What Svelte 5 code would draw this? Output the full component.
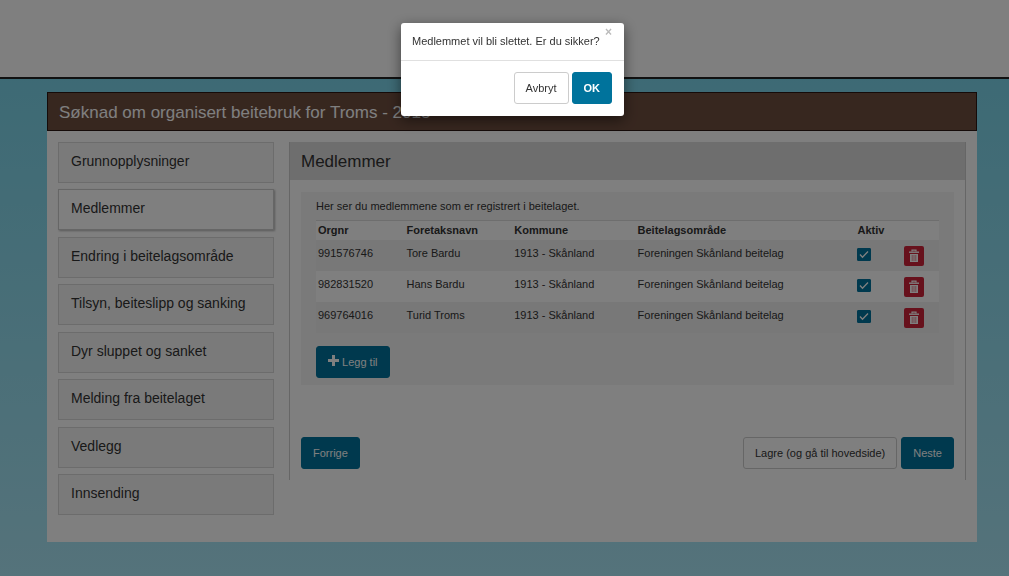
<script>
  const steps = [
    'Grunnopplysninger',
    'Medlemmer',
    'Endring i beitelagsområde',
    'Tilsyn, beiteslipp og sanking',
    'Dyr sluppet og sanket',
    'Melding fra beitelaget',
    'Vedlegg',
    'Innsending'
  ];
  const current = 'Medlemmer';

  let members = $state([
    { orgnr: '991576746', name: 'Tore Bardu', kommune: '1913 - Skånland', area: 'Foreningen Skånland beitelag', active: true },
    { orgnr: '982831520', name: 'Hans Bardu', kommune: '1913 - Skånland', area: 'Foreningen Skånland beitelag', active: true },
    { orgnr: '969764016', name: 'Turid Troms', kommune: '1913 - Skånland', area: 'Foreningen Skånland beitelag', active: true }
  ]);
  let pending = $state(0);
  let open = $state(true);

  function ask(i) {
    pending = i;
    open = true;
  }
  function confirm() {
    members.splice(pending, 1);
    open = false;
  }
</script>

<div class="page">
  <header class="top"></header>
  <div class="container">
    <h1>Søknad om organisert beitebruk for Troms - 2015</h1>
    <div class="columns">
      <nav>
        {#each steps as step}
          <a href="#{step}" class:active={step === current}>{step}</a>
        {/each}
      </nav>
      <main>
        <h2>Medlemmer</h2>
        <div class="content">
          <section class="well">
            <p>Her ser du medlemmene som er registrert i beitelaget.</p>
            <table>
              <colgroup>
                <col class="c1" /><col class="c2" /><col class="c3" /><col class="c4" /><col class="c5" /><col class="c6" />
              </colgroup>
              <thead>
                <tr>
                  <th>Orgnr</th><th>Foretaksnavn</th><th>Kommune</th><th>Beitelagsområde</th><th>Aktiv</th><th></th>
                </tr>
              </thead>
              <tbody>
                {#each members as m, i}
                  <tr>
                    <td>{m.orgnr}</td>
                    <td>{m.name}</td>
                    <td>{m.kommune}</td>
                    <td>{m.area}</td>
                    <td><input type="checkbox" aria-label="Aktiv" bind:checked={m.active} /></td>
                    <td>
                      <button class="trash" aria-label="Slett" onclick={() => ask(i)}>
                        <svg viewBox="0 0 12 14" width="12" height="14" fill="none" stroke="#fff">
                          <path d="M4 2.5V1.2h4v1.3" stroke-width="1.2" />
                          <path d="M1 3.2h10" stroke-width="1.4" />
                          <path d="M2 5v8h8V5z" fill="#fff" stroke="none" />
                          <path d="M4.2 6v6M6 6v6M7.8 6v6" stroke="#cf2338" stroke-width=".5" />
                        </svg>
                      </button>
                    </td>
                  </tr>
                {/each}
              </tbody>
            </table>
            <button class="btn primary add">
              <svg viewBox="0 0 11 11" width="11" height="11"><path d="M4 0h3v4h4v3H7v4H4V7H0V4h4z" fill="#fff" /></svg>
              Legg til
            </button>
          </section>
          <div class="actions">
            <button class="btn primary">Forrige</button>
            <span class="space"></span>
            <button class="btn">Lagre (og gå til hovedside)</button>
            <button class="btn primary">Neste</button>
          </div>
        </div>
      </main>
    </div>
  </div>
</div>

{#if open}
  <div class="backdrop">
    <div class="modal" role="dialog" aria-modal="true" aria-labelledby="question">
      <div class="body">
        <span id="question">Medlemmet vil bli slettet. Er du sikker?</span>
        <button class="close" aria-label="Lukk" onclick={() => (open = false)}>×</button>
      </div>
      <div class="foot">
        <button class="btn" onclick={() => (open = false)}>Avbryt</button>
        <button class="btn primary strong" onclick={confirm}>OK</button>
      </div>
    </div>
  </div>
{/if}

<style>
  :global(body) {
    margin: 0;
    font: 11px/16px "Liberation Sans", Arial, sans-serif;
    color: #333;
  }
  * { box-sizing: border-box; }
  button, input { font: inherit; margin: 0; }
  .page {
    min-height: 100vh;
    background: linear-gradient(#74d2e8, #aae6f6);
  }
  .top {
    height: 79px;
    background: #fff;
    border-bottom: 2px solid #222;
  }
  .container {
    margin: 13px 32px 0 47px;
    background: #fff;
    padding-bottom: 27px;
  }
  h1 {
    margin: 0;
    height: 39px;
    padding: 0 11px;
    border: 1px solid #2a1612;
    background: #6f4e3f;
    color: #fff;
    font-size: 17px;
    line-height: 40px;
    font-weight: 400;
  }
  .columns {
    display: flex;
    align-items: flex-start;
    gap: 15px;
    padding: 11px 11px 0;
  }
  nav {
    flex: 0 0 216px;
    min-height: 373px;
    display: flex;
    flex-direction: column;
    justify-content: space-between;
  }
  nav a {
    height: 41px;
    padding: 0 12px;
    border: 1px solid #d8d8d8;
    background: #f5f5f5;
    color: #333;
    font-size: 14px;
    line-height: 36px;
    text-decoration: none;
  }
  nav a.active {
    background: #fff;
    border-color: #ccc;
    box-shadow: 1px 1px 2px rgba(0, 0, 0, .3);
  }
  main {
    flex: 1;
    min-width: 0;
    border: solid #ccc;
    border-width: 0 1px;
  }
  h2 {
    margin: 0;
    height: 38px;
    padding: 0 11px;
    background: #dcdcdc;
    font-size: 17px;
    line-height: 40px;
    font-weight: 400;
  }
  .content { padding: 12px 11px 11px; }
  .well {
    background: #f5f5f5;
    padding: 6px 15px 7px;
  }
  p { margin: 0 0 6px; }
  table {
    width: 100%;
    table-layout: fixed;
    border-collapse: collapse;
    border-top: 1px solid #ddd;
    background: #fff;
  }
  .c1 { width: 14.2%; }
  .c2 { width: 17.3%; }
  .c3 { width: 19.8%; }
  .c4 { width: 35.3%; }
  .c5 { width: 7.4%; }
  .c6 { width: 6%; }
  th {
    height: 19px;
    padding: 0 2px;
    text-align: left;
  }
  td {
    height: 31px;
    padding: 5px 2px 0;
    vertical-align: top;
  }
  tbody tr:nth-child(odd) { background: #f0f0f0; }
  input {
    appearance: none;
    display: block;
    width: 14px;
    height: 13px;
    margin-top: 3px;
    border-radius: 1px;
    border: 1px solid #00739c;
    background: #fff;
  }
  input:checked {
    background: #00739c url("data:image/svg+xml,%3Csvg xmlns='http://www.w3.org/2000/svg' viewBox='0 0 12 11'%3E%3Cpath d='M2 5.5l2.5 2.7L10 2.5' fill='none' stroke='white' stroke-width='1.3'/%3E%3C/svg%3E") center / 12px 11px no-repeat;
  }
  .trash {
    display: flex;
    align-items: center;
    justify-content: center;
    width: 20px;
    height: 20px;
    margin-top: 1px;
    padding: 0;
    border: 0;
    border-radius: 2px;
    background: #cf2338;
  }
  .btn {
    height: 32px;
    padding: 0 11px;
    border: 1px solid #ccc;
    border-radius: 3px;
    background: #fff;
    color: #333;
    white-space: nowrap;
  }
  .primary {
    background: #00739c;
    border-color: #00739c;
    color: #fff;
  }
  .strong { font-weight: 700; }
  .add {
    display: block;
    margin-top: 13px;
  }
  .actions {
    display: flex;
    gap: 4px;
    margin-top: 52px;
  }
  .space { flex: 1; }
  .backdrop {
    position: fixed;
    inset: 0;
    display: flex;
    justify-content: center;
    align-items: flex-start;
    padding: 23px 0 0 16px;
    background: rgba(0, 0, 0, .5);
  }
  .modal {
    width: 223px;
    background: #fff;
    border-radius: 3px;
    box-shadow: 0 4px 14px rgba(0, 0, 0, .5);
  }
  .body {
    display: flex;
    justify-content: space-between;
    align-items: flex-start;
    padding: 0 12px 0 11px;
    height: 38px;
    border-bottom: 1px solid #e0e0e0;
    line-height: 37px;
    white-space: nowrap;
  }
  .close {
    border: 0;
    padding: 0;
    background: none;
    color: #bbb;
    font-size: 12px;
    font-weight: 700;
    line-height: 18px;
  }
  .foot {
    display: flex;
    justify-content: flex-end;
    gap: 3px;
    padding: 11px 12px 12px;
  }
</style>
